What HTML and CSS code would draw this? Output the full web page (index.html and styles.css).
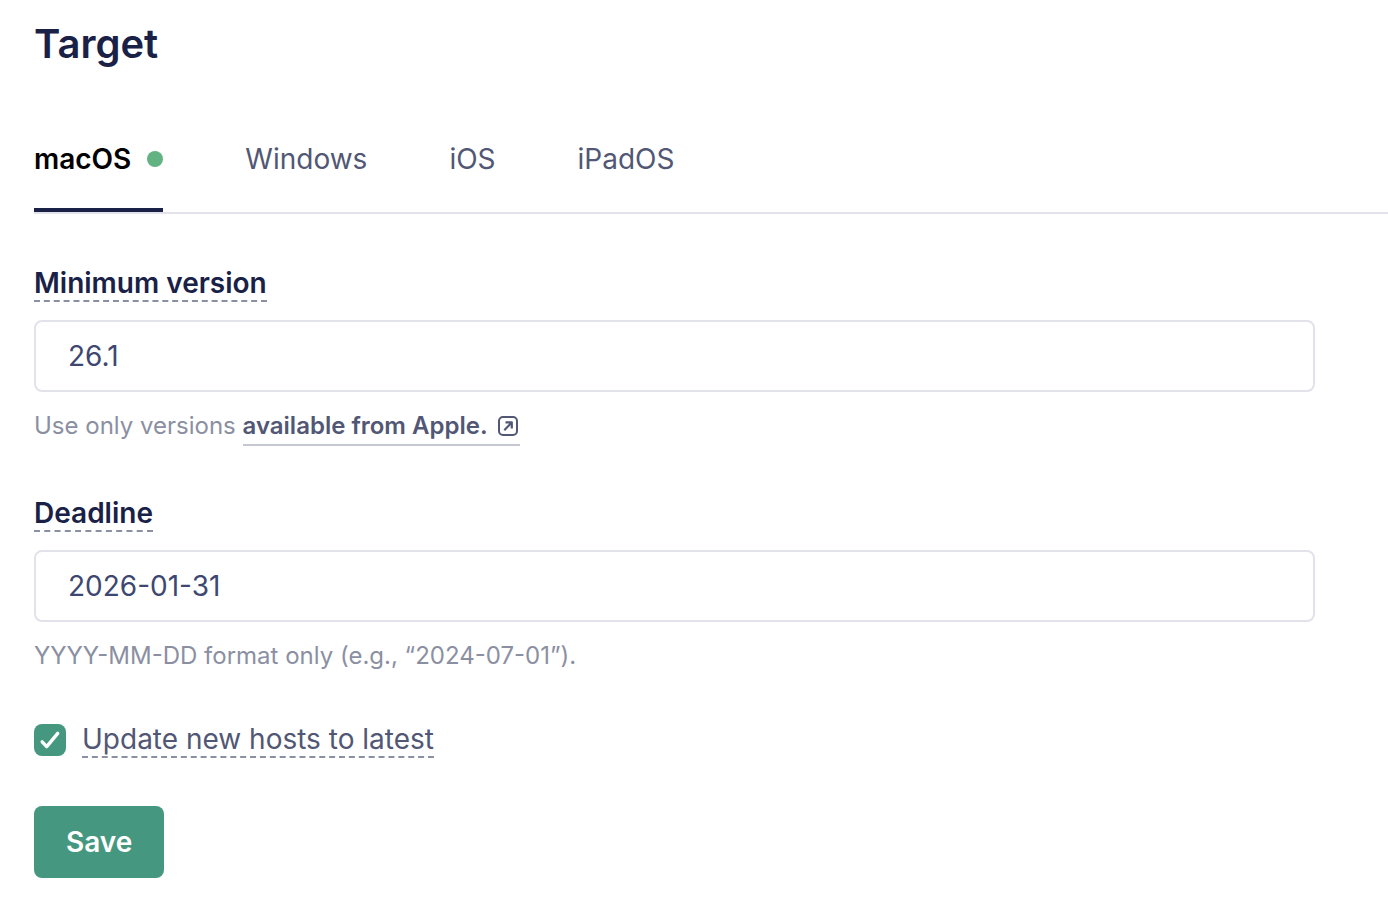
FILE: index.html
```html
<!DOCTYPE html>
<html lang="en">
<head>
<meta charset="utf-8">
<meta name="viewport" content="width=device-width, initial-scale=1">
<title>Target</title>
<link rel="stylesheet" href="styles.css">
</head>
<body>
<main class="target">
  <h2 class="title">Target</h2>
  <div class="tabs" role="tablist">
    <button class="tab tab-selected" type="button" role="tab" aria-selected="true">macOS<span class="dot"></span></button>
    <button class="tab" type="button" role="tab" aria-selected="false">Windows</button>
    <button class="tab" type="button" role="tab" aria-selected="false">iOS</button>
    <button class="tab" type="button" role="tab" aria-selected="false">iPadOS</button>
  </div>
  <form class="form">
    <div class="field">
      <label class="label" for="version">Minimum version</label>
      <input class="input" id="version" type="text" value="26.1">
      <p class="help">Use only versions <a class="link" href="#">available from Apple.<svg class="external" viewBox="0 0 20 20" fill="none" stroke="currentColor" stroke-width="2" aria-hidden="true"><rect x="1" y="1" width="18" height="18" rx="4"/><path d="M6.300 14.200L13.600 6.600M7.500 6.400h6.300v6" stroke-width="2.200" stroke-linejoin="round"/></svg></a></p>
    </div>
    <div class="field">
      <label class="label" for="deadline">Deadline</label>
      <input class="input" id="deadline" type="text" value="2026-01-31">
      <p class="help">YYYY-MM-DD format only (e.g., “2024-07-01”).</p>
    </div>
    <div class="check-row">
      <span class="check">
        <input class="checkbox" id="latest" type="checkbox" checked>
        <svg class="tick" viewBox="0 0 32 32" fill="none" stroke="#fff" stroke-width="3.400" stroke-linecap="round" stroke-linejoin="round" aria-hidden="true"><path d="M8.200 17.800L12.700 22.600L23.700 9.300"/></svg>
      </span>
      <label class="check-label" for="latest">Update new hosts to latest</label>
    </div>
    <button class="save" type="submit">Save</button>
  </form>
</main>
</body>
</html>
```
FILE: styles.css
```css
* {
  box-sizing: border-box;
}

body {
  margin: 0;
  background: #fff;
  color: #515774;
  font-family: Inter, sans-serif;
  font-size: 28px;
  line-height: 40px;
}

.target {
  padding: 16px 0 32px 34px;
}

.title {
  margin: 0;
  color: #192147;
  font-size: 40px;
  font-weight: 600;
  line-height: 56px;
}

.tabs {
  display: flex;
  gap: 82px;
  margin-top: 34px;
  border-bottom: 2px solid #e2e3ea;
}

.tab {
  display: flex;
  align-items: center;
  gap: 16px;
  height: 106px;
  margin: 0;
  padding: 0;
  border: 0;
  background: none;
  color: #515774;
  font: inherit;
}

.tab-selected {
  color: #000;
  font-weight: 600;
  box-shadow: inset 0 -4px #192147;
}

.dot {
  width: 16px;
  height: 16px;
  border-radius: 50%;
  background: #63b382;
}

.form {
  display: flex;
  flex-direction: column;
  align-items: flex-start;
  gap: 48px;
  margin-top: 52px;
  padding-right: 73px;
}

.field {
  display: flex;
  flex-direction: column;
  align-items: flex-start;
  width: 100%;
}

.field + .field {
  margin-top: 2px;
}

.label {
  margin-bottom: 18px;
  border-bottom: 2px dashed #8b8fa2;
  color: #192147;
  font-weight: 600;
  line-height: 34px;
}

.input {
  width: 100%;
  height: 72px;
  padding: 0 32px;
  border: 2px solid #e2e3ea;
  border-radius: 8px;
  background: #fff;
  color: #3e4771;
  font: inherit;
}

.help {
  margin: 16px 0 0;
  color: #8b8fa2;
  font-size: 24px;
  line-height: 36px;
}

.link {
  display: inline-flex;
  align-items: center;
  gap: 10px;
  padding-right: 2px;
  border-bottom: 2px solid #c5c7d1;
  color: #515774;
  font-weight: 600;
  text-decoration: none;
}

.external {
  width: 20px;
  height: 20px;
}

.check-row {
  display: flex;
  align-items: center;
  gap: 16px;
}

.check {
  display: grid;
}

.checkbox,
.tick {
  grid-area: 1 / 1;
  width: 32px;
  height: 32px;
  margin: 0;
}

.checkbox {
  border-radius: 8px;
  background: #45987f;
  appearance: none;
}

.tick {
  pointer-events: none;
}

.check-label {
  border-bottom: 2px dashed #8b8fa2;
  line-height: 34px;
}

.save {
  height: 72px;
  padding: 0 32px;
  border: 0;
  border-radius: 8px;
  background: #45987f;
  color: #fff;
  font: inherit;
  font-weight: 600;
}
```
